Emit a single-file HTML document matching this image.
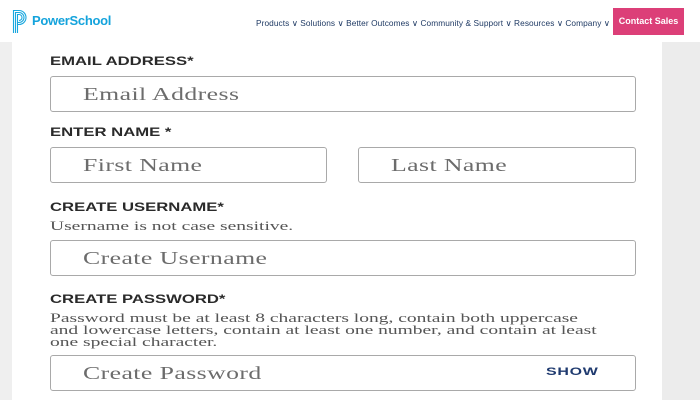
<!DOCTYPE html>
<html><head><meta charset="utf-8"><style>
*{margin:0;padding:0;box-sizing:border-box}
body{width:700px;height:400px;overflow:hidden;background:#efefef;position:relative;font-family:"Liberation Sans",sans-serif}
.hdr{position:absolute;left:0;top:0;width:700px;height:42px;background:#fff}
.logo{position:absolute;left:12px;top:9px}
.brand{position:absolute;left:32px;top:13px;font-size:13px;font-weight:bold;color:#14a3dc;letter-spacing:-0.3px}
.nav{position:absolute;left:256px;top:18px;font-size:8.3px;color:#1f3a64;white-space:nowrap;letter-spacing:0.08px}
.btn{position:absolute;left:613px;top:8px;width:71px;height:27px;background:#dc3f78;color:#fff;font-size:9px;font-weight:bold;text-align:center;line-height:27px}
.deco{position:absolute;right:0;top:40px;width:38px;height:360px;background:#ececec}
.card{position:absolute;left:12px;top:42px;width:650px;height:358px;background:#fff}
.s{display:inline-block;transform-origin:0 50%;white-space:nowrap}
.lbl{position:absolute;left:50px;font-size:11.5px;font-weight:bold;color:#2a2a2a}
.lbl .s{transform:scaleX(1.45)}
.in{position:absolute;border:1px solid #a9a9a9;border-radius:3px;background:#fff;font-family:"Liberation Serif",serif;font-size:18px;color:#6c6c6c;padding-left:32px;line-height:34px}
.in .s{transform:scaleX(1.43);letter-spacing:0.3px}
.hint{position:absolute;left:50px;font-family:"Liberation Serif",serif;font-size:13px;color:#555;line-height:12px}
.hint .s{transform:scaleX(1.5)}
.show{position:absolute;left:546px;top:366px;font-size:11px;font-weight:bold;color:#1f3a6f;letter-spacing:0.5px}
.show .s{transform:scaleX(1.45)}
</style></head><body>
<div class="deco"></div>
<div class="card"></div>
<div class="hdr">
<svg class="logo" width="17" height="25" viewBox="0 0 17 25" fill="none" stroke="#1aa7de" stroke-width="1.1">
<path d="M1.5 24V1.5H7a7 7 0 0 1 0 14H5"/>
<path d="M3.5 24V3.5H7a5 5 0 0 1 0 10H5.5"/>
<path d="M5.5 24V5.5H7a3 3 0 0 1 0 6"/>
</svg>
<div class="brand">PowerSchool</div>
<div class="nav">Products ∨ Solutions ∨ Better Outcomes ∨ Community &amp; Support ∨ Resources ∨ Company ∨</div>
<div class="btn">Contact Sales</div>
</div>
<div class="lbl" style="top:56px"><span class="s">EMAIL ADDRESS*</span></div>
<div class="in" style="left:50px;top:76px;width:586px;height:36px"><span class="s">Email Address</span></div>
<div class="lbl" style="top:127px"><span class="s">ENTER NAME *</span></div>
<div class="in" style="left:50px;top:147px;width:277px;height:36px"><span class="s">First Name</span></div>
<div class="in" style="left:358px;top:147px;width:278px;height:36px"><span class="s">Last Name</span></div>
<div class="lbl" style="top:202px"><span class="s">CREATE USERNAME*</span></div>
<div class="hint" style="top:220px"><span class="s">Username is not case sensitive.</span></div>
<div class="in" style="left:50px;top:240px;width:586px;height:36px"><span class="s">Create Username</span></div>
<div class="lbl" style="top:294px"><span class="s">CREATE PASSWORD*</span></div>
<div class="hint" style="top:312px"><span class="s">Password must be at least 8 characters long, contain both uppercase</span><br><span class="s">and lowercase letters, contain at least one number, and contain at least</span><br><span class="s">one special character.</span></div>
<div class="in" style="left:50px;top:355px;width:586px;height:36px"><span class="s">Create Password</span></div>
<div class="show"><span class="s">SHOW</span></div>
</body></html>
